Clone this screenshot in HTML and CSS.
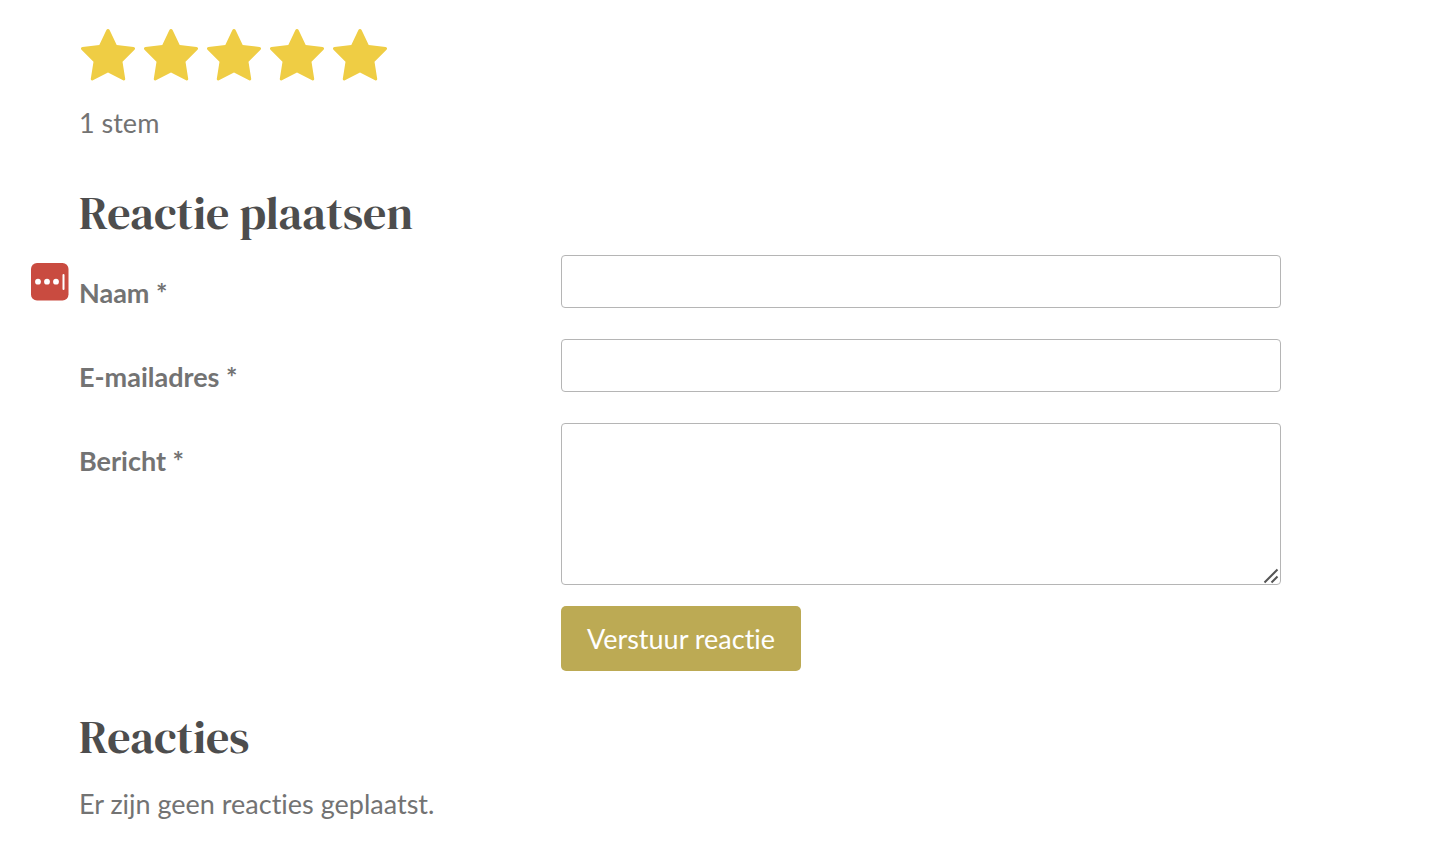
FILE: index.html
```
<!DOCTYPE html>
<html lang="nl">
<head>
    <meta charset="UTF-8">
    <meta name="viewport" content="width=device-width, initial-scale=1.0">
    <title>Reactie plaatsen</title>
    <link rel="stylesheet" href="styles.css">
</head>
<body>
    <svg width="0" height="0" class="sprite" aria-hidden="true">
        <symbol id="star" viewBox="0 0 54 52">
            <path d="M27 0c.8 0 1.300.4 1.700 1.200L35.700 16l16.800 2c1.500.2 2 1.700 1 2.800L41.500 32.800l2.700 16.900c.2 1.500-.8 2.200-2.100 1.600L27 43.500l-15.100 7.800c-1.300.6-2.300-.1-2.100-1.600l2.700-16.900L.5 20.800c-1-1.100-.5-2.600 1-2.800l16.800-2 7-14.800C25.700.4 26.200 0 27 0z"/>
        </symbol>
    </svg>
    <main>
        <div class="rating" role="img" aria-label="5 sterren">
            <svg><use href="#star"/></svg>
            <svg><use href="#star"/></svg>
            <svg><use href="#star"/></svg>
            <svg><use href="#star"/></svg>
            <svg><use href="#star"/></svg>
        </div>
        <p class="votes">1 stem</p>

        <h2>Reactie plaatsen</h2>
        <form>
            <div class="row">
                <label for="name">Naam *</label>
                <input type="text" id="name">
                <svg class="manager" viewBox="0 0 38 38" aria-hidden="true">
                    <rect width="37.500" height="37.500" rx="6" fill="#c94b40"/>
                    <g fill="#fff">
                        <circle cx="7" cy="18.700" r="2.900"/>
                        <circle cx="16" cy="18.700" r="2.900"/>
                        <circle cx="25" cy="18.700" r="2.900"/>
                        <rect x="31.500" y="11" width="2" height="16" rx="1"/>
                    </g>
                </svg>
            </div>
            <div class="row">
                <label for="email">E-mailadres *</label>
                <input type="email" id="email">
            </div>
            <div class="row">
                <label for="message">Bericht *</label>
                <textarea id="message"></textarea>
                <svg class="grip" viewBox="0 0 16 16" aria-hidden="true">
                    <path d="M1.500 14.500l13-13M8.500 14.500l6-6"/>
                </svg>
            </div>
            <div class="row submit">
                <button type="submit">Verstuur reactie</button>
            </div>
        </form>

        <h2>Reacties</h2>
        <p class="empty">Er zijn geen reacties geplaatst.</p>
    </main>
</body>
</html>
```
FILE: styles.css
```
* { box-sizing: border-box; }
body { margin: 0; background: #fff; color: #737373; font: 27px/40px Lato, sans-serif; font-variant-ligatures: none; }
main { padding: 29px 153px 20px 79px; }
p { margin: 0; }
.sprite { position: absolute; }
.rating { display: flex; gap: 9px; padding-left: 2px; }
.rating svg { width: 54px; height: 52px; fill: #efcd44; }
.votes { margin: 22px 0 43px; }
h2 { margin: 39px 0 15px; color: #4d4d4d; font: normal 46px/54px "DM Serif Display", "Liberation Serif", serif; }
.row { position: relative; display: grid; grid-template-columns: 2fr 3fr; column-gap: 2px; margin-bottom: 26px; }
label { padding-top: 18px; font-weight: bold; }
input, textarea { width: 100%; height: 53px; padding: 8px 12px; border: 1px solid #b5b5b5; border-radius: 4px; background: #fff; color: inherit; font: inherit; }
textarea { display: block; height: 162px; resize: vertical; }
textarea::-webkit-resizer { background: transparent; }
.grip { position: absolute; right: 2px; bottom: 1px; width: 16px; height: 16px; fill: none; stroke: #555; stroke-width: 2; pointer-events: none; }
.manager { position: absolute; left: -48px; top: 8px; width: 38px; height: 38px; }
.submit { margin: -5px 0 0; }
button { grid-column: 2; justify-self: start; min-width: 240px; min-height: 65px; padding: 12px 24px; border: none; border-radius: 5px; background: #bcaa54; color: #fff; font: inherit; font-variant-ligatures: none; cursor: pointer; }
.empty { margin-top: 20px; }
```
